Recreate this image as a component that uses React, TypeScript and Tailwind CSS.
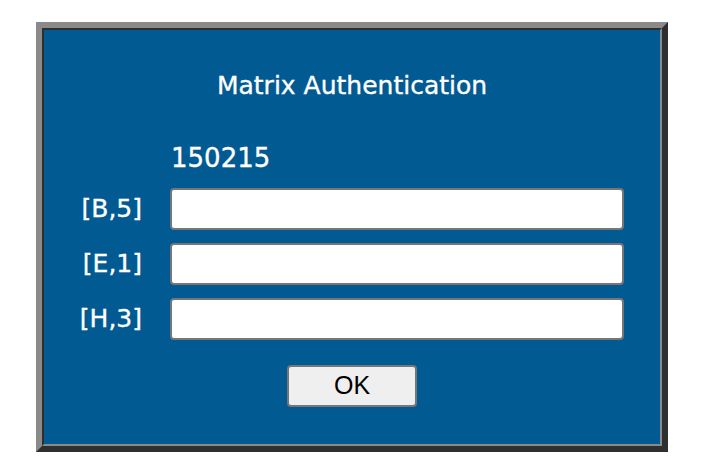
import { useState } from 'react'

const rows = [
  { key: 'b5', label: '[B,5]' },
  { key: 'e1', label: '[E,1]' },
  { key: 'h3', label: '[H,3]' },
]

export default function App() {
  const [values, setValues] = useState<Record<string, string>>({})

  return (
    <div className="min-h-[474px] w-full bg-white pt-[22px]">
      {/* outer frame: outset then inset border */}
      <div className="ml-[36px] w-[632px] h-[430px] border-[6px] border-t-[#8a8a8a] border-l-[#8a8a8a] border-b-[#2f2f2f] border-r-[#2f2f2f]">
        <div className="h-full w-full border-2 border-t-[#2f2f2f] border-l-[#2f2f2f] border-b-[#8a8a8a] border-r-[#8a8a8a] bg-[#025a93] font-['DejaVu_Sans',sans-serif] text-white [-webkit-text-stroke:0.35px_white]">
          <h1 className="mt-[41px] h-[30px] text-center text-[25px] leading-[30px] font-normal">
            Matrix Authentication
          </h1>

          <div className="mt-[42px] grid grid-cols-[126px_454px] gap-y-[13px]">
            <div />
            <div className="h-[30px] pl-[1px] text-[26px] leading-[30px]">150215</div>

            {rows.map((row, i) => (
              <div key={row.key} className="contents">
                <div className={`flex items-center justify-end pr-[28px] text-[25px] ${i === 0 ? 'mt-[2px]' : ''}`}>
                  {row.label}
                </div>
                <input
                  type="text"
                  value={values[row.key] ?? ''}
                  onChange={(e) => setValues({ ...values, [row.key]: e.target.value })}
                  className={`h-[42px] w-[454px] rounded-[4px] border-2 border-[#767676] bg-white px-2 text-black outline-none [-webkit-text-stroke:0] ${i === 0 ? 'mt-[2px]' : ''}`}
                />
              </div>
            ))}
          </div>

          <div className="mt-[25px] flex justify-center">
            <button className="h-[42px] w-[130px] rounded-[4px] border-2 border-[#767676] bg-[#efefef] font-['Liberation_Sans',sans-serif] text-[25px] text-black [-webkit-text-stroke:0]">
              OK
            </button>
          </div>
        </div>
      </div>
    </div>
  )
}
